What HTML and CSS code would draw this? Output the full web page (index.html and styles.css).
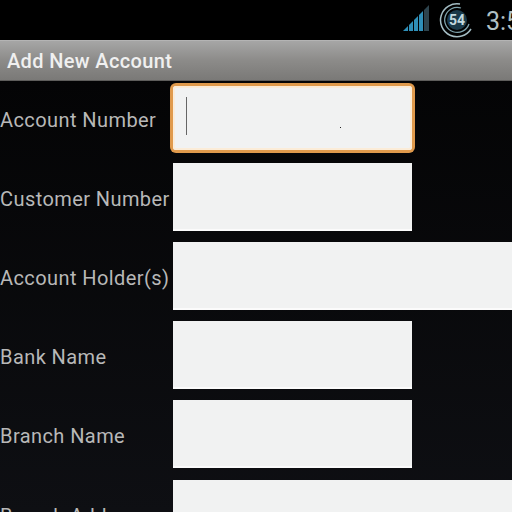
FILE: index.html
```html
<!DOCTYPE html>
<html lang="en">
<head>
    <meta charset="UTF-8">
    <title>Add New Account</title>
    <link rel="stylesheet" href="styles.css">
</head>
<body>
    <div class="status-bar">
        <svg class="signal" width="26" height="26" viewBox="0 0 26 26">
            <polygon points="0,26 5,21 5,26" fill="#2f8fb8"/>
            <polygon points="6,20 10,16 10,26 6,26" fill="#2f8fb8"/>
            <polygon points="11,15 15,11 15,26 11,26" fill="#2f8fb8"/>
            <polygon points="16,10 20,6 20,26 16,26" fill="#2f8fb8"/>
            <polygon points="21,5 26,0 26,26 21,26" fill="#2e444e"/>
        </svg>
        <svg class="clock" width="36" height="36" viewBox="0 0 36 36">
            <path d="M21 2 A16.500 16.500 0 1 0 32 27" fill="none" stroke="#a3bcc3" stroke-width="1.5"/>
            <path d="M22 6 A12.500 12.500 0 1 0 30 22" fill="none" stroke="#7fa3ad" stroke-width="1.3"/>
            <circle cx="18" cy="18" r="10" fill="#1a3a4a"/>
            <text x="18" y="23" text-anchor="middle" class="clock-num">54</text>
        </svg>
        <div class="time">3:55</div>
    </div>
    <div class="title-bar">Add New Account</div>
    <div class="form">
        <div class="row">
            <label class="label">Account Number</label>
            <div class="field focused"><span class="cursor"></span><span class="speck"></span></div>
        </div>
        <div class="row">
            <label class="label">Customer Number</label>
            <div class="field"></div>
        </div>
        <div class="row">
            <label class="label">Account Holder(s)</label>
            <div class="field wide"></div>
        </div>
        <div class="row">
            <label class="label">Bank Name</label>
            <div class="field"></div>
        </div>
        <div class="row">
            <label class="label">Branch Name</label>
            <div class="field"></div>
        </div>
        <div class="row">
            <label class="label">Branch Address</label>
            <div class="field wide"></div>
        </div>
    </div>
</body>
</html>
```

FILE: styles.css
```css
html, body {
    margin: 0;
    height: 512px;
    overflow: hidden;
}

body {
    background-color: #0b0c0f;
    font-family: Roboto, "Liberation Sans", sans-serif;
}

.status-bar {
    height: 40px;
    background-color: #000;
    display: flex;
    align-items: center;
    justify-content: flex-end;
}

.signal {
    margin-right: 10px;
    margin-bottom: 4px;
}

.clock {
    margin-right: 11px;
}

.clock-num {
    font-size: 14px;
    font-weight: 700;
    fill: #c3d9df;
}

.time {
    width: 26px;
    overflow: hidden;
    white-space: nowrap;
    color: #b0c0c4;
    font-size: 25px;
    line-height: 40px;
    margin-top: 4px;
}

.title-bar {
    height: 41px;
    box-sizing: border-box;
    padding-left: 7px;
    background: linear-gradient(#a6a6a6, #8c8b89 50%, #7a7977);
    border-top: 1px solid #b4b4b4;
    border-bottom: 1px solid #5e5d5b;
    color: #f0f0f0;
    font-size: 20px;
    font-weight: 500;
    letter-spacing: 0.35px;
    line-height: 40px;
}

.form {
    height: 431px;
    box-sizing: border-box;
    padding-top: 3px;
    display: flex;
    flex-direction: column;
    gap: 11px;
    background: linear-gradient(#040405, #0e0f13);
}

.row {
    display: flex;
    align-items: center;
    height: 68px;
    flex-shrink: 0;
}

.row:last-child {
    margin-top: 1px;
}

.label {
    width: 173px;
    flex-shrink: 0;
    margin-top: 4px;
    color: #b8b8b8;
    font-size: 20px;
    letter-spacing: 0.42px;
    white-space: nowrap;
}

.field {
    width: 239px;
    height: 68px;
    background-color: #f1f2f2;
    box-shadow: inset 0 -2px 0 #fbfbfb;
    position: relative;
}

.field.wide {
    flex-grow: 1;
}

.field.focused {
    height: 64px;
    box-shadow: inset 0 0 0 2px #fbecd8, 0 0 0 3px #e09a4c;
    border-radius: 3px;
}

.cursor {
    position: absolute;
    left: 13px;
    top: 11px;
    width: 1px;
    height: 38px;
    background-color: #666;
}

.speck {
    position: absolute;
    left: 167px;
    top: 41px;
    width: 1px;
    height: 1px;
    background-color: #222;
}
```
